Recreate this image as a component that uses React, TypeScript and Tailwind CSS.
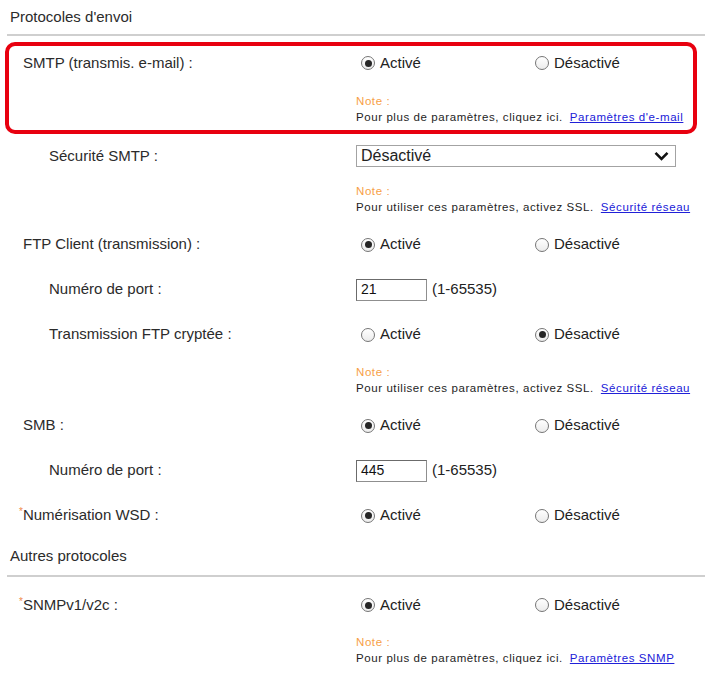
import React from 'react';

const font = "font-['Liberation_Sans',Arial,sans-serif]";

interface RadioProps {
  checked: boolean;
  label: string;
}

const Radio: React.FC<RadioProps> = ({ checked, label }) => (
  <div className="flex items-center w-[174px] pl-[5px]">
    <span className="flex items-center justify-center w-[14px] h-[14px] rounded-full border border-[#767676] bg-gradient-to-b from-white to-[#ececec]">
      {checked && <span className="w-[7px] h-[7px] rounded-full bg-[#262626]" />}
    </span>
    <span className="ml-[5px] text-[15px] text-[#222]">{label}</span>
  </div>
);

const OnOff: React.FC<{ on: boolean }> = ({ on }) => (
  <div className="flex items-center">
    <Radio checked={on} label="Activé" />
    <Radio checked={!on} label="Désactivé" />
  </div>
);

interface RowProps {
  label: string;
  indent?: boolean;
  required?: boolean;
  labelWidth?: string;
  height?: string;
  children: React.ReactNode;
}

// label column ends at x=356, value column starts there
const Row: React.FC<RowProps> = ({ label, indent, required, labelWidth = 'w-[356px]', height = 'h-[45px]', children }) => (
  <div className={`flex items-center ${height}`}>
    <div
      className={`${labelWidth} shrink-0 text-[15px] text-[#2b2b2b] ${
        indent ? 'pl-[49px]' : required ? 'pl-[19px]' : 'pl-[23px]'
      }`}
    >
      {required && <span className="text-[#f08a4b] text-[10px] align-top">*</span>}
      {label}
    </div>
    <div className="flex-1 flex items-center">{children}</div>
  </div>
);

interface NoteProps {
  text: string;
  link: string;
  offset?: string;
  className?: string;
}

const Note: React.FC<NoteProps> = ({ text, link, offset = 'pl-[356px]', className = '' }) => (
  <div className={`${offset} ${className} text-[11.5px] tracking-[0.58px]`}>
    <div className="leading-[15px] text-[#f7a046]">Note :</div>
    <div className="leading-[16px] text-[#1e1e1e] whitespace-nowrap">
      {text}
      <a href="#" className="ml-[7px] text-[#2020d8] underline">
        {link}
      </a>
    </div>
  </div>
);

const PortInput: React.FC<{ value: string }> = ({ value }) => (
  <div className="flex items-center">
    <div className="w-[71px] h-[22px] border border-[#8f8f8f] border-t-[#6b6b6b] border-l-[#6b6b6b] bg-white flex items-center pl-[4px] text-[14px] text-[#111]">
      {value}
    </div>
    <span className="ml-[5px] text-[15px] text-[#222]">(1-65535)</span>
  </div>
);

const SectionHeader: React.FC<{ title: string; height: string }> = ({ title, height }) => (
  <>
    <div className={`flex items-center pl-[10px] text-[15px] text-[#2b2b2b] ${height}`}>{title}</div>
    <div className="h-[2px] mx-[7px] bg-[#cfcfcf]" />
  </>
);

export default function App() {
  return (
    <div className={`${font} w-[712px] h-[676px] bg-white overflow-hidden`}>
      <SectionHeader title="Protocoles d'envoi" height="h-[34px]" />

      <div className="mt-[6px] ml-[5px] w-[692px] border-4 border-[#e8000f] rounded-[10px] pb-[5px]">
        <Row label="SMTP (transmis. e-mail) :" labelWidth="w-[347px] !pl-[14px]" height="h-[34px]">
          <OnOff on />
        </Row>
        <Note
          offset="pl-[347px]"
          className="pt-[14px]"
          text="Pour plus de paramètres, cliquez ici."
          link="Paramètres d'e-mail"
        />
      </div>

      <Row label="Sécurité SMTP :" indent height="h-[44px]">
        <div className="w-[320px] h-[22px] border border-[#a3a3a3] bg-white flex items-center justify-between pl-[4px] pr-[6px]">
          <span className="text-[16px] text-[#222]">Désactivé</span>
          <svg width="15" height="10" viewBox="0 0 15 10" fill="none">
            <path d="M1.5 1.8l6 6 6-6" stroke="#111" strokeWidth="2.6" />
          </svg>
        </div>
      </Row>
      <Note
        className="pt-[6px] pb-[7px]"
        text="Pour utiliser ces paramètres, activez SSL."
        link="Sécurité réseau"
      />

      <Row label="FTP Client (transmission) :">
        <OnOff on />
      </Row>
      <Row label="Numéro de port :" indent>
        <PortInput value="21" />
      </Row>
      <Row label="Transmission FTP cryptée :" indent>
        <OnOff on={false} />
      </Row>
      <Note
        className="pt-[8px] pb-[7px]"
        text="Pour utiliser ces paramètres, activez SSL."
        link="Sécurité réseau"
      />

      <Row label="SMB :">
        <OnOff on />
      </Row>
      <Row label="Numéro de port :" indent>
        <PortInput value="445" />
      </Row>
      <Row label="Numérisation WSD :" required>
        <OnOff on />
      </Row>

      <SectionHeader title="Autres protocoles" height="h-[37px]" />

      <div className="mt-[5px]">
        <Row label="SNMPv1/v2c :" required height="h-[46px]">
          <OnOff on />
        </Row>
      </div>
      <Note
        className="pt-[7px]"
        text="Pour plus de paramètres, cliquez ici."
        link="Paramètres SNMP"
      />
    </div>
  );
}
